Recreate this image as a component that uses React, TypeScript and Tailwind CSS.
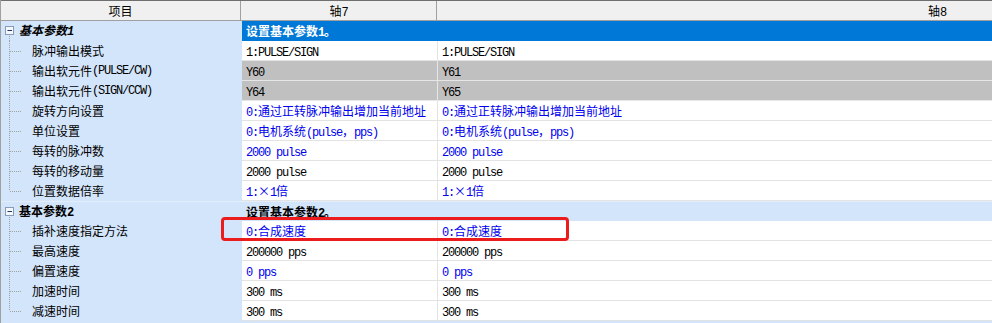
import React from 'react';

const CJK = "'Noto Sans CJK SC', sans-serif";

type Row = {
  label: string;
  a: string;
  b: string;
  tone?: 'blue' | 'black';
  gray?: boolean;
  last?: boolean;
};

type Group = {
  label: string;
  italic?: boolean;
  note: string;
  noteStyle: 'selected' | 'plain';
  rows: Row[];
};

const GROUPS: Group[] = [
  {
    label: '基本参数1',
    italic: true,
    note: '设置基本参数1。',
    noteStyle: 'selected',
    rows: [
      { label: '脉冲输出模式', a: '1:PULSE/SIGN', b: '1:PULSE/SIGN' },
      { label: '输出软元件(PULSE/CW)', a: 'Y60', b: 'Y61', gray: true },
      { label: '输出软元件(SIGN/CCW)', a: 'Y64', b: 'Y65', gray: true },
      { label: '旋转方向设置', a: '0:通过正转脉冲输出增加当前地址', b: '0:通过正转脉冲输出增加当前地址', tone: 'blue' },
      { label: '单位设置', a: '0:电机系统(pulse，pps)', b: '0:电机系统(pulse，pps)', tone: 'blue' },
      { label: '每转的脉冲数', a: '2000 pulse', b: '2000 pulse', tone: 'blue' },
      { label: '每转的移动量', a: '2000 pulse', b: '2000 pulse' },
      { label: '位置数据倍率', a: '1:×1倍', b: '1:×1倍', tone: 'blue', last: true },
    ],
  },
  {
    label: '基本参数2',
    note: '设置基本参数2。',
    noteStyle: 'plain',
    rows: [
      { label: '插补速度指定方法', a: '0:合成速度', b: '0:合成速度', tone: 'blue' },
      { label: '最高速度', a: '200000 pps', b: '200000 pps' },
      { label: '偏置速度', a: '0 pps', b: '0 pps', tone: 'blue' },
      { label: '加速时间', a: '300 ms', b: '300 ms' },
      { label: '减速时间', a: '300 ms', b: '300 ms', last: true },
    ],
  },
];

// SimSun-ish look: ascii is narrow mono, CJK is full width sans
function Txt({ s }: { s: string }) {
  const parts = s.split(/([\x20-\x7e]+)/).filter((p) => p !== '');
  return (
    <>
      {parts.map((p, i) =>
        /^[\x20-\x7e]+$/.test(p) ? (
          <span key={i} className="whitespace-pre tracking-[-1.2px]" style={{ fontFamily: "'Liberation Mono', monospace" }}>
            {p}
          </span>
        ) : (
          <span key={i} style={{ fontFamily: CJK }}>
            {p}
          </span>
        )
      )}
    </>
  );
}

function MinusBox() {
  return (
    <svg width="18" height="20" className="shrink-0">
      <line x1="8.5" y1="15" x2="8.5" y2="20" stroke="#a0a0a0" strokeDasharray="1 1" />
      <rect x="4.5" y="5.5" width="8" height="8" fill="#f4f7fb" stroke="#8a9cb5" />
      <line x1="6.5" y1="9.5" x2="11" y2="9.5" stroke="#24366b" />
    </svg>
  );
}

function Branch({ last }: { last?: boolean }) {
  return (
    <svg width="31" height="20" className="shrink-0">
      <line x1="8.5" y1="0" x2="8.5" y2={last ? 10 : 20} stroke="#a0a0a0" strokeDasharray="1 1" />
      <line x1="9" y1="10.5" x2="21" y2="10.5" stroke="#a0a0a0" strokeDasharray="1 1" />
    </svg>
  );
}

function Cell({ v, tone, gray, wide }: { v: string; tone?: 'blue' | 'black'; gray?: boolean; wide?: boolean }) {
  return (
    <div
      className={`${wide ? 'w-[1000px]' : 'w-[196px] border-r'} h-[20px] shrink-0 border-b px-[4px] text-[12px] leading-[19px] whitespace-nowrap ${
        gray ? 'bg-[#c0c0c0] border-[#e6e6e6]' : 'bg-white border-[#e3e3e3]'
      } ${tone === 'blue' ? 'text-[#0000f0]' : 'text-black'}`}
    >
      <Txt s={v} />
    </div>
  );
}

export default function App() {
  return (
    <div className="relative w-[992px] h-[323px] overflow-hidden bg-[#d3e5fa] border-l border-[#a0a0a0]" style={{ fontFamily: CJK }}>
      {/* header */}
      <div className="flex h-[21px] border-t border-[#6e6e6e] border-b border-b-[#a0a0a0] bg-[#f0f0f0] text-[12px] leading-[19px] text-black">
        <div className="w-[240px] shrink-0 border-r border-[#a0a0a0] text-center">项目</div>
        <div className="w-[196px] shrink-0 border-r border-[#a0a0a0] text-center">
          <Txt s="轴7" />
        </div>
        <div className="w-[1000px] shrink-0 text-center">
          <Txt s="轴8" />
        </div>
      </div>

      {GROUPS.map((g, gi) => (
        <div key={g.label} className={gi > 0 ? 'border-t border-[#e4eefb]' : ''}>
          <div className={`flex ${gi > 0 ? 'h-[19px]' : 'h-[20px]'}`}>
            <div className="w-[241px] shrink-0 flex items-center bg-[#d3e5fa] text-[12px] font-bold text-black">
              <MinusBox />
              <span className={g.italic ? 'italic' : ''}>
                <Txt s={g.label} />
              </span>
            </div>
            <div
              className={`flex-1 px-[4px] text-[12px] leading-[19px] font-bold whitespace-nowrap ${
                g.noteStyle === 'selected' ? 'bg-[#0078d7] text-white' : 'bg-[#d3e5fa] text-black'
              }`}
            >
              <Txt s={g.note} />
            </div>
          </div>
          {g.rows.map((r) => (
            <div key={r.label} className="flex h-[20px]">
              <div className="w-[241px] shrink-0 flex items-center bg-[#d3e5fa] text-[12px] text-black whitespace-nowrap">
                <Branch last={r.last} />
                <Txt s={r.label} />
              </div>
              <Cell v={r.a} tone={r.tone} gray={r.gray} />
              <Cell v={r.b} tone={r.tone} gray={r.gray} wide />
            </div>
          ))}
        </div>
      ))}

      {/* highlight box */}
      <div className="absolute left-[220px] top-[217px] w-[348px] h-[24px] rounded-[4px] border-[3px] border-[#ec1c1c]" />
    </div>
  );
}
